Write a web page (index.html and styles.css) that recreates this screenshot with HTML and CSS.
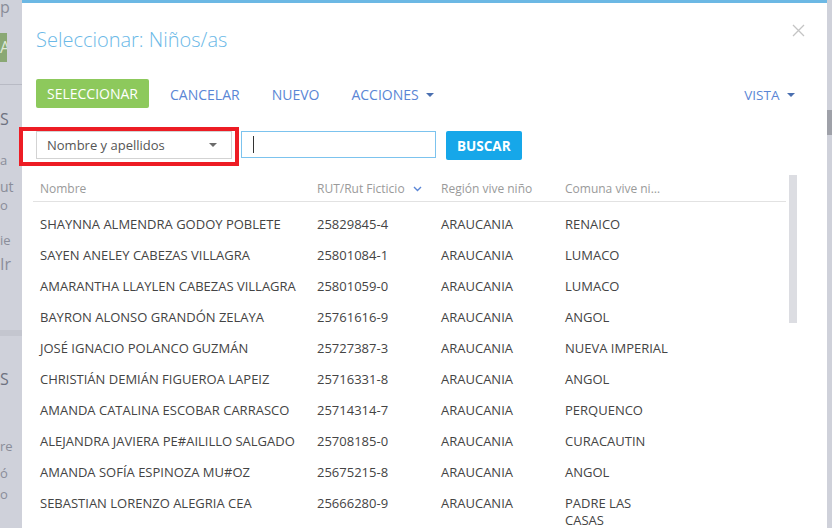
FILE: index.html
```html
<!DOCTYPE html>
<html lang="es">

<head>
    <meta charset="UTF-8">
    <meta name="viewport" content="width=device-width, initial-scale=1.0">
    <title>Seleccionar: Niños/as</title>
    <link rel="stylesheet" href="styles.css">
</head>

<body>
    <!-- page behind the modal -->
    <div class="page">
        <div class="side">
            <span class="frag f-p">p</span>
            <span class="frag f-btn">A</span>
            <span class="frag f-line"></span>
            <span class="frag f-s">S</span>
            <span class="frag f-a">a</span>
            <span class="frag f-ut">ut</span>
            <span class="frag f-o">o</span>
            <span class="frag f-ie">ie</span>
            <span class="frag f-ir">Ir</span>
            <span class="frag f-line2"></span>
            <span class="frag f-s2">S</span>
            <span class="frag f-re">re</span>
            <span class="frag f-oo">ó</span>
            <span class="frag f-o2">o</span>
        </div>
        <div class="page-right">
            <span class="page-thumb"></span>
        </div>
    </div>

    <div class="modal">
        <div class="modal-header">
            <h1 class="modal-title">Seleccionar: Niños/as</h1>
            <span class="close">
                <svg width="13" height="13" viewBox="0 0 13 13">
                    <path d="M1 1 L12 12 M12 1 L1 12" stroke="#c4c4c4" stroke-width="1.3" fill="none"/>
                </svg>
            </span>
        </div>

        <div class="toolbar">
            <button class="btn btn-green">SELECCIONAR</button>
            <button class="link first">CANCELAR</button>
            <button class="link">NUEVO</button>
            <button class="link">ACCIONES <span class="caret"></span></button>
            <button class="link right">VISTA <span class="caret"></span></button>
        </div>

        <div class="search">
            <div class="select">
                <span>Nombre y apellidos</span>
                <span class="caret gray"></span>
            </div>
            <div class="text-input"><span class="cursor"></span></div>
            <button class="btn btn-blue">BUSCAR</button>
            <span class="highlight"></span>
        </div>

        <div class="grid-wrap">
            <div class="grid">
                <div class="row head">
                    <div class="c1">Nombre</div>
                    <div class="c2">RUT/Rut Ficticio
                        <svg class="sort" width="9" height="6" viewBox="0 0 9 6">
                            <path d="M1 1 L4.5 4.5 L8 1" stroke="#5b86d6" stroke-width="1.4" fill="none"/>
                        </svg>
                    </div>
                    <div class="c3">Región vive niño</div>
                    <div class="c4 trunc">Comuna vive niño/a</div>
                </div>
                <div class="body" id="rows"></div>
            </div>
            <div class="scrollbar"><span class="thumb"></span></div>
        </div>
    </div>

    <script>
        const rows = [
            ['SHAYNNA ALMENDRA GODOY POBLETE', '25829845-4', 'ARAUCANIA', 'RENAICO'],
            ['SAYEN ANELEY CABEZAS VILLAGRA', '25801084-1', 'ARAUCANIA', 'LUMACO'],
            ['AMARANTHA LLAYLEN CABEZAS VILLAGRA', '25801059-0', 'ARAUCANIA', 'LUMACO'],
            ['BAYRON ALONSO GRANDÓN ZELAYA', '25761616-9', 'ARAUCANIA', 'ANGOL'],
            ['JOSÉ IGNACIO POLANCO GUZMÁN', '25727387-3', 'ARAUCANIA', 'NUEVA IMPERIAL'],
            ['CHRISTIÁN DEMIÁN FIGUEROA LAPEIZ', '25716331-8', 'ARAUCANIA', 'ANGOL'],
            ['AMANDA CATALINA ESCOBAR CARRASCO', '25714314-7', 'ARAUCANIA', 'PERQUENCO'],
            ['ALEJANDRA JAVIERA PE#AILILLO SALGADO', '25708185-0', 'ARAUCANIA', 'CURACAUTIN'],
            ['AMANDA SOFÍA ESPINOZA MU#OZ', '25675215-8', 'ARAUCANIA', 'ANGOL'],
            ['SEBASTIAN LORENZO ALEGRIA CEA', '25666280-9', 'ARAUCANIA', 'PADRE LAS CASAS']
        ];

        const out = document.getElementById('rows');
        rows.forEach(r => {
            out.innerHTML += `<div class="row"><div class="c1">${r[0]}</div><div class="c2">${r[1]}</div><div class="c3">${r[2]}</div><div class="c4">${r[3]}</div></div>`;
        });
    </script>
</body>

</html>
```

FILE: styles.css
```css
body {
    margin: 0;
    padding: 0;
    width: 832px;
    height: 528px;
    overflow: hidden;
    position: relative;
    font-family: 'Open Sans', 'Noto Sans', sans-serif;
    background: #cdcfd8;
}

button {
    font-family: inherit;
}

/* backdrop page */
.page {
    display: flex;
    justify-content: space-between;
    height: 528px;
}

.side {
    position: relative;
    width: 22px;
    background: #cfd1da;
    color: #8a8d99;
    font-size: 16px;
}

.frag {
    position: absolute;
    left: 0;
}

.f-p { top: -4px; }
.f-btn { top: 33px; width: 7px; height: 29px; background: #8aa874; color: #dfe8d6; line-height: 29px; overflow: hidden; }
.f-line { top: 84px; width: 22px; height: 1px; background: #b8bac4; }
.f-s { top: 108px; color: #6e7180; }
.f-a { top: 151px; font-size: 13px; }
.f-ut { top: 177px; font-size: 14px; }
.f-o { top: 196px; font-size: 13px; }
.f-ie { top: 231px; font-size: 13px; }
.f-ir { top: 253px; }
.f-line2 { top: 330px; width: 22px; height: 6px; background: #c4c6cf; }
.f-s2 { top: 368px; color: #6e7180; }
.f-re { top: 437px; font-size: 13px; }
.f-oo { top: 464px; font-size: 13px; }
.f-o2 { top: 485px; font-size: 13px; }

.page-right {
    width: 5px;
    background: #cfd1da;
    position: relative;
}

.page-thumb {
    position: absolute;
    top: 110px;
    left: 0;
    width: 5px;
    height: 25px;
    background: #9fa1a9;
}

/* modal */
.modal {
    position: absolute;
    left: 22px;
    top: 0;
    width: 805px;
    height: 528px;
    background: white;
    border-top: 3px solid #6cb8e4;
}

.modal-header {
    display: flex;
    justify-content: space-between;
    padding: 22px 22px 0 14px;
}

.modal-title {
    margin: 0;
    font-size: 20px;
    font-weight: 300;
    line-height: 30px;
    color: #6bb9e7;
}

.close {
    margin-top: -5px;
}

.toolbar {
    display: flex;
    align-items: center;
    margin-top: 24px;
    padding: 0 32px 0 14px;
    height: 29px;
}

.btn {
    border: none;
    border-radius: 2px;
    color: white;
    font-size: 14px;
    height: 29px;
    padding: 0 11px;
    cursor: pointer;
}

.btn-green {
    background-color: #8dc95c;
}

.btn-blue {
    background-color: #16a7e9;
    font-weight: bold;
    font-size: 13.5px;
    padding: 0 11px;
    margin-left: 10px;
}

.link {
    background: none;
    border: none;
    padding: 2px 0 0;
    margin-left: 32px;
    color: #5a86d5;
    font-size: 14px;
    cursor: pointer;
}

.link.first {
    margin-left: 21px;
}

.link.right {
    margin-left: auto;
    font-size: 13.5px;
}

.caret {
    display: inline-block;
    width: 0;
    height: 0;
    margin-left: 4px;
    vertical-align: 3px;
    border-left: 4px solid transparent;
    border-right: 4px solid transparent;
    border-top: 4px solid #4a6fb0;
}

.caret.gray {
    border-top-color: #6b6b6b;
    margin-right: 2px;
}

/* search row */
.search {
    position: relative;
    display: flex;
    align-items: flex-start;
    margin-top: 23px;
    padding-left: 14px;
}

.select {
    box-sizing: border-box;
    display: flex;
    align-items: center;
    justify-content: space-between;
    width: 196px;
    height: 28px;
    padding: 0 12px 0 10px;
    border: 1px solid #d3d3d3;
    font-size: 13px;
    color: #555;
}

.text-input {
    box-sizing: border-box;
    display: flex;
    align-items: center;
    width: 195px;
    height: 27px;
    margin-left: 9px;
    padding-left: 11px;
    border: 1px solid #7cc3ee;
}

.cursor {
    width: 1px;
    height: 17px;
    background: #333;
}

.highlight {
    position: absolute;
    left: -3px;
    top: -4px;
    width: 212px;
    height: 31px;
    border: 4px solid #ed1c24;
}

/* grid */
.grid-wrap {
    display: flex;
    margin-top: 15px;
    padding-left: 11px;
}

.grid {
    width: 753px;
    font-size: 13px;
    color: #444;
}

.row {
    display: flex;
    line-height: 17px;
}

.row > div {
    box-sizing: border-box;
    padding: 7px 7px;
}

.c1 { width: 277px; }
.c2 { width: 124px; }
.c3 { width: 124px; }
.c4 { width: 119px; }

.row.head {
    color: #9a9a9a;
    font-size: 12px;
    border-bottom: 1px solid #e2e2e2;
}

.row.head > div {
    padding: 5px 7px 4px;
}

.row.head .c4 {
    width: 110px;
}

.trunc {
    white-space: nowrap;
    overflow: hidden;
    text-overflow: ellipsis;
}

.sort {
    margin-left: 5px;
    vertical-align: 1px;
}

.body {
    padding-top: 7px;
}

.scrollbar {
    width: 8px;
    margin-left: 3px;
}

.thumb {
    display: block;
    width: 8px;
    height: 148px;
    background: #dcdde2;
}
```
